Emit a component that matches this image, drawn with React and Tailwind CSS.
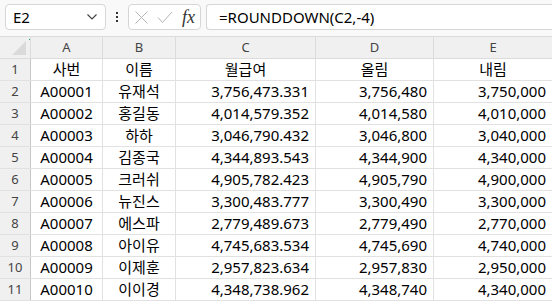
import React from 'react'

// --- Sheet data -------------------------------------------------------------
const COLS = [
  { key: 'A', w: 'w-[72px]' },
  { key: 'B', w: 'w-[73px]' },
  { key: 'C', w: 'w-[140px]' },
  { key: 'D', w: 'w-[118px]' },
  { key: 'E', w: 'w-[119px]' },
]

const ROWS = [
  ['A00001', '유재석', '3,756,473.331', '3,756,480', '3,750,000'],
  ['A00002', '홍길동', '4,014,579.352', '4,014,580', '4,010,000'],
  ['A00003', '하하', '3,046,790.432', '3,046,800', '3,040,000'],
  ['A00004', '김종국', '4,344,893.543', '4,344,900', '4,340,000'],
  ['A00005', '크러쉬', '4,905,782.423', '4,905,790', '4,900,000'],
  ['A00006', '뉴진스', '3,300,483.777', '3,300,490', '3,300,000'],
  ['A00007', '에스파', '2,779,489.673', '2,779,490', '2,770,000'],
  ['A00008', '아이유', '4,745,683.534', '4,745,690', '4,740,000'],
  ['A00009', '이제훈', '2,957,823.634', '2,957,830', '2,950,000'],
  ['A00010', '이이경', '4,348,738.962', '4,348,740', '4,340,000'],
]

const HEAD = ['사번', '이름', '월급여', '올림', '내림']

function Cell({ w, align, children }) {
  return (
    <div className={`${w} h-full shrink-0 flex items-center border-r border-[#e1e1e1] ${align}`}>
      {children}
    </div>
  )
}

function Row({ n, values, header }) {
  return (
    <div className="flex h-[22px] border-b border-[#e1e1e1]">
      <div className="w-[31px] shrink-0 h-full flex items-center justify-center bg-[#f0f0f0] border-r border-[#c6c6c6] text-[13px] text-[#444]">
        {n}
      </div>
      {COLS.map((c, i) => {
        let align = 'justify-end pr-[6px]'
        if (header || i < 2) align = 'justify-center'
        return (
          <Cell key={c.key} w={c.w} align={align}>
            {values[i]}
          </Cell>
        )
      })}
    </div>
  )
}

export default function App() {
  return (
    <div className="w-[552px] h-[302px] overflow-hidden bg-white text-black text-[15px] leading-none" style={{ fontFamily: '"Noto Sans", "Noto Sans CJK KR", sans-serif' }}>
      {/* formula bar */}
      <div className="h-[36px] flex items-start pt-[4px] bg-[#f9f9f9]">
        <div className="ml-[5px] w-[101px] h-[26px] flex items-center justify-between px-[7px] bg-white border border-[#d6d6d6] rounded-[4px]">
          <span>E2</span>
          <svg width="12" height="8" viewBox="0 0 12 8" fill="none" stroke="#444" strokeWidth="1.2">
            <path d="M1.5 1.5 L6 6 L10.5 1.5" />
          </svg>
        </div>
        <div className="w-[22px] h-[26px] flex flex-col items-center justify-center gap-[2px]">
          <span className="w-[2px] h-[2px] bg-[#333]" />
          <span className="w-[2px] h-[2px] bg-[#333]" />
          <span className="w-[2px] h-[2px] bg-[#333]" />
        </div>
        <div className="w-[73px] h-[26px] flex items-center gap-[8px] pl-[5px] bg-white border border-[#d6d6d6] rounded-[4px]">
          <svg width="15" height="15" viewBox="0 0 15 15" stroke="#b5b5b5" strokeWidth="1">
            <path d="M1.5 1.5 L13.5 13.5 M13.5 1.5 L1.5 13.5" />
          </svg>
          <svg width="16" height="13" viewBox="0 0 16 13" fill="none" stroke="#b5b5b5" strokeWidth="1">
            <path d="M1 6.5 L5.5 11.5 L15 1" />
          </svg>
          <span className="italic text-[18px] text-[#333] ml-[1px]" style={{ fontFamily: '"Liberation Serif", serif' }}>fx</span>
        </div>
        <div className="ml-[5px] flex-1 h-[26px] flex items-center pl-[12px] bg-white border border-[#d6d6d6] border-r-0 rounded-l-[4px]">
          =ROUNDDOWN(C2,-4)
        </div>
      </div>

      {/* column headers */}
      <div className="flex h-[23px] bg-[#f0f0f0] border-t border-[#dcdcdc] border-b border-[#c6c6c6] text-[13px] text-[#444]">
        <div className="w-[31px] shrink-0 h-full relative border-r border-[#dcdcdc]">
          <span className="absolute left-[29px] top-[2px] w-[1px] h-[1px] bg-[#21a366]" />
          <svg className="absolute right-[4px] bottom-[3px]" width="14" height="14" viewBox="0 0 14 14">
            <path d="M14 0 L14 14 L0 14 Z" fill="#dadada" />
          </svg>
        </div>
        {COLS.map((c) => (
          <div key={c.key} className={`${c.w} shrink-0 h-full flex items-center justify-center border-r border-[#dcdcdc]`}>
            {c.key}
          </div>
        ))}
      </div>

      <Row n={1} values={HEAD} header />
      {ROWS.map((r, i) => (
        <Row key={i} n={i + 2} values={r} />
      ))}
    </div>
  )
}
